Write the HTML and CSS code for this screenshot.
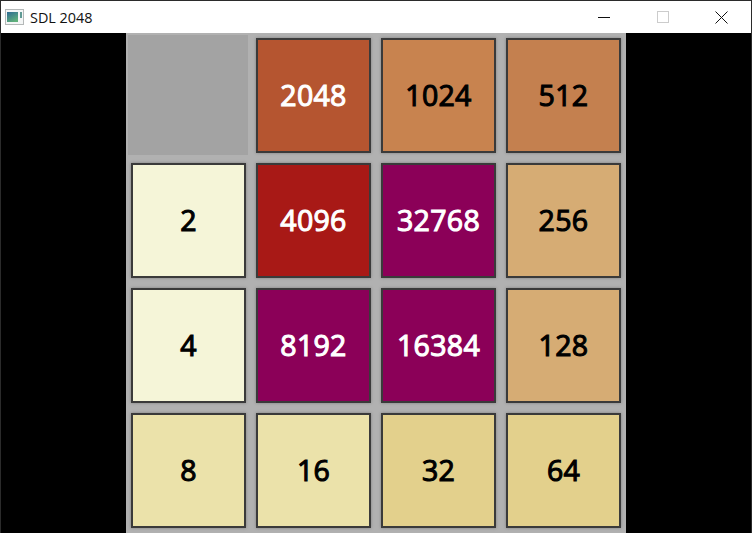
FILE: index.html
```html
<!DOCTYPE html>
<html lang="en">
  <head>
    <meta charset="utf-8">
    <title>SDL 2048</title>
    <link rel="stylesheet" href="styles.css">
  </head>
  <body>
    <div class="window">
      <div class="titlebar">
        <svg class="app-icon" width="20" height="17" viewBox="0 0 20 17">
          <defs>
            <linearGradient id="screen" x1="0" y1="0" x2="0.6" y2="1">
              <stop offset="0" stop-color="#2d6a94"/>
              <stop offset="1" stop-color="#5fb07a"/>
            </linearGradient>
          </defs>
          <rect x="0.5" y="0.5" width="18" height="15" fill="#f4f6f6" stroke="#b4b8b8"/>
          <rect x="2" y="3" width="11" height="10" fill="url(#screen)"/>
          <rect x="15" y="3" width="2" height="6" fill="#5f9a94"/>
        </svg>
        <span class="title">SDL 2048</span>
        <div class="controls">
          <div class="control">
            <svg width="12" height="12" viewBox="0 0 12 12"><path d="M0 6.5H12" stroke="#111" fill="none"/></svg>
          </div>
          <div class="control">
            <svg width="12" height="12" viewBox="0 0 12 12"><rect x="0.5" y="0.5" width="11" height="11" stroke="#ccc" fill="none"/></svg>
          </div>
          <div class="control">
            <svg width="13" height="13" viewBox="0 0 13 13"><path d="M0.5 0.5L12.5 12.5M12.5 0.5L0.5 12.5" stroke="#111" fill="none"/></svg>
          </div>
        </div>
      </div>
      <div class="content">
        <div class="board">
          <div class="cell empty"><div class="tile"></div></div>
          <div class="cell"><div class="tile t2048">2048</div></div>
          <div class="cell"><div class="tile t1024">1024</div></div>
          <div class="cell"><div class="tile t512">512</div></div>

          <div class="cell"><div class="tile t2">2</div></div>
          <div class="cell"><div class="tile t4096">4096</div></div>
          <div class="cell"><div class="tile tbig">32768</div></div>
          <div class="cell"><div class="tile t256">256</div></div>

          <div class="cell"><div class="tile t2">4</div></div>
          <div class="cell"><div class="tile tbig">8192</div></div>
          <div class="cell"><div class="tile tbig">16384</div></div>
          <div class="cell"><div class="tile t256">128</div></div>

          <div class="cell"><div class="tile t8">8</div></div>
          <div class="cell"><div class="tile t8">16</div></div>
          <div class="cell"><div class="tile t32">32</div></div>
          <div class="cell"><div class="tile t32">64</div></div>
        </div>
      </div>
    </div>
  </body>
</html>
```

FILE: styles.css
```css
* {margin: 0; padding: 0; box-sizing: border-box;}

html, body {
	height: 100%;
	overflow: hidden;
	background: #000;
}

.window {
	height: 533px;
	display: flex;
	flex-direction: column;
	border: 1px solid #2b2b2b;
	border-bottom: none;
}

/* title bar */
.titlebar {
	height: 32px;
	flex: none;
	display: flex;
	align-items: center;
	background: #fff;
	padding-left: 4px;
	font: 14.4px "Open Sans", "Noto Sans", sans-serif;
	color: #111;
}
.app-icon {margin-right: 5px;}
.title {flex: 1;}
.controls {display: flex; height: 100%;}
.control {
	width: 59px;
	display: flex;
	align-items: center;
	justify-content: center;
}

/* board */
.content {
	flex: 1;
	display: flex;
	justify-content: center;
	background: #000;
}
.board {
	width: 500px;
	display: grid;
	grid-template-columns: repeat(4, 125px);
	grid-template-rows: repeat(4, 125px);
	background: #b1b1b1;
}
.cell {padding: 5px;}
.cell.empty {padding: 2px 3px 3px 2px;}
.empty .tile {
	background: #a3a3a3;
	border: none;
	box-shadow: none;
}
.tile {
	height: 100%;
	display: flex;
	align-items: center;
	justify-content: center;
	border: 2px solid #3a3a3a;
	box-shadow: 0 0 3px #808080;
	font: 28.5px "Open Sans", sans-serif;
	letter-spacing: 0.3px;
	color: #000;
	-webkit-text-stroke: 1.1px currentColor;
	padding-bottom: 2px;
}

.t2 {background: #f5f5d8;}
.t8 {background: #ebe2aa;}
.t32 {background: #e3d08c;}
.t256 {background: #d6ac74;}
.t512 {background: #c4804f;}
.t1024 {background: #c8834f;}
.t2048 {background: #b55530; color: #fff;}
.t4096 {background: #a81916; color: #fff;}
.tbig {background: #8b0058; color: #fff;}
```
